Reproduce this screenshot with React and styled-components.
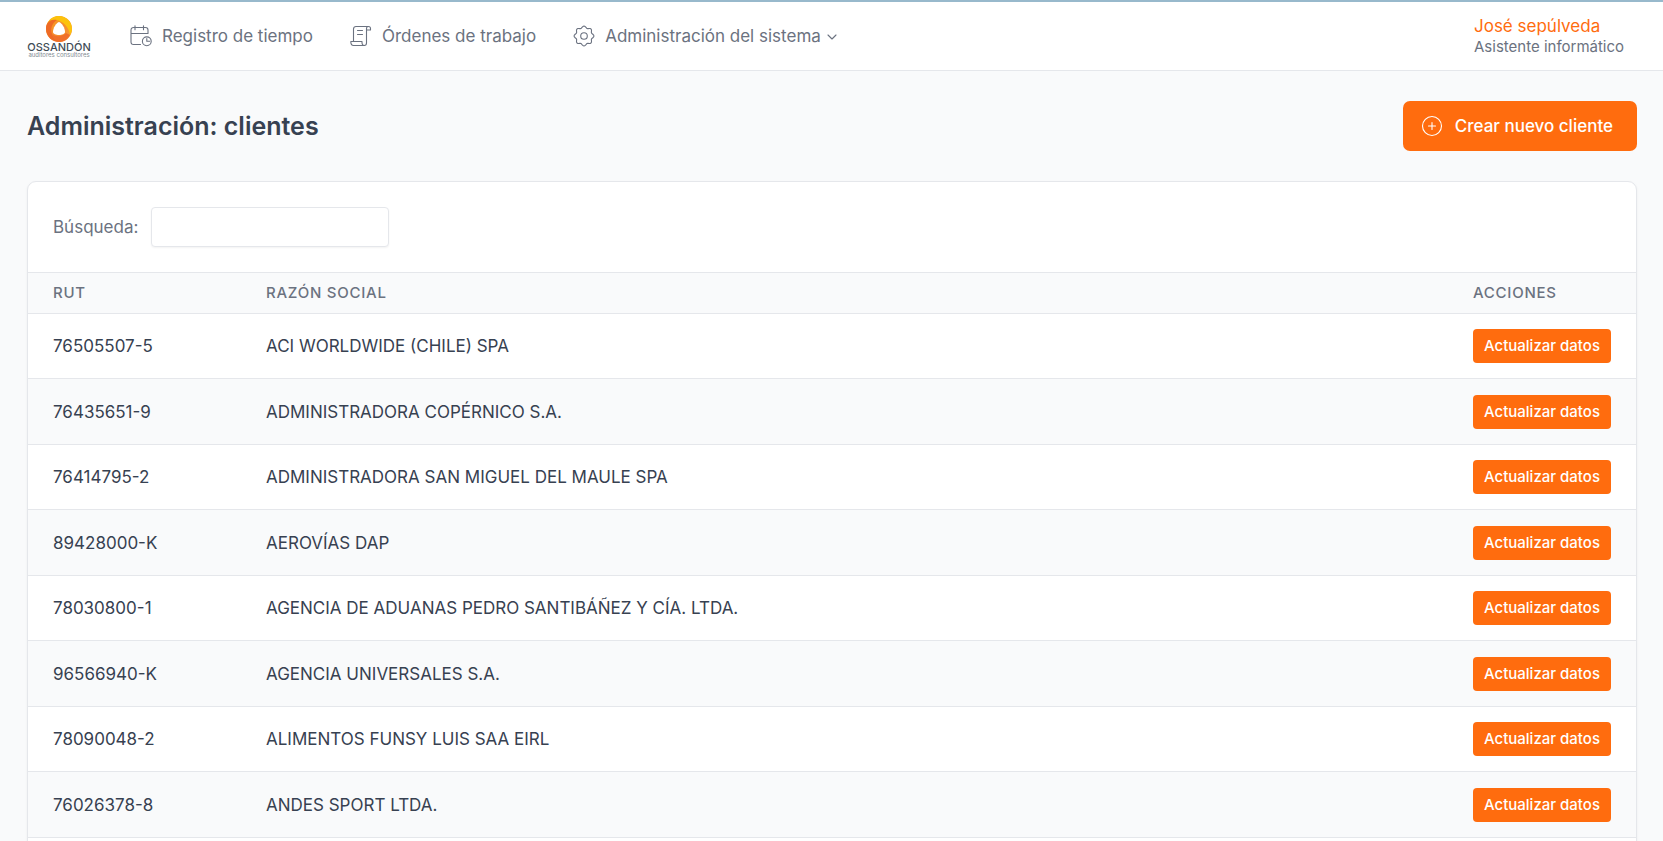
import React, { useState } from "react";
import styled, { createGlobalStyle, css } from "styled-components";

const GlobalStyle = createGlobalStyle`
	*,
	*::before,
	*::after {
		box-sizing: border-box;
	}

	body {
		margin: 0;
		background-color: #f9fafb;
		color: #374151;
		font-family: Inter, "Liberation Sans", sans-serif;
		font-size: 17px;
		line-height: 26px;
	}

	button,
	input {
		font: inherit;
	}
`;

const Header = styled.header`
	display: flex;
	align-items: center;
	justify-content: space-between;
	height: 71px;
	padding: 0 36px 0 26px;
	background-color: #fff;
	border-top: 2px solid #98b9cc;
	border-bottom: 1px solid #e5e7eb;
`;

const Menu = styled.nav`
	display: flex;
	align-items: center;
	gap: 37px;
`;

const LogoLink = styled.a`
	display: flex;
`;

const menuItem = css`
	display: flex;
	align-items: center;
	gap: 10px;
	padding: 0;
	border: 0;
	background: none;
	color: #6b7280;
	text-decoration: none;
	cursor: pointer;
`;

const MenuLink = styled.a`
	${menuItem}
`;

const MenuButton = styled.button`
	${menuItem}
`;

const MenuLabel = styled.span`
	display: flex;
	align-items: center;
	gap: 6px;
`;

const Icon = styled.svg`
	flex: none;
	fill: none;
	stroke: currentColor;
	stroke-width: 1.1;
	stroke-linecap: round;
	stroke-linejoin: round;
`;

const User = styled.div`
	display: flex;
	flex-direction: column;
	min-width: 153px;
`;

const UserName = styled.span`
	color: #ff6c0e;
	line-height: 22px;
`;

const UserRole = styled.span`
	color: #6b7280;
	font-size: 15px;
	line-height: 20px;
`;

const Main = styled.main`
	padding: 30px 26px 30px 27px;
`;

const TitleBar = styled.div`
	display: flex;
	align-items: center;
	justify-content: space-between;
	margin-bottom: 30px;
`;

const Title = styled.h1`
	margin: 0;
	font-size: 25px;
	font-weight: 600;
	line-height: 34px;
`;

const Button = styled.button`
	display: inline-flex;
	align-items: center;
	justify-content: center;
	gap: ${(props) => (props.$small ? "0" : "12px")};
	height: ${(props) => (props.$small ? "34px" : "50px")};
	padding: ${(props) => (props.$small ? "0 11px" : "0 24px 0 18px")};
	border: 0;
	border-radius: ${(props) => (props.$small ? "4px" : "7px")};
	background-color: #ff6c0e;
	color: #fff;
	font-size: ${(props) => (props.$small ? "15px" : "17px")};
	font-weight: 500;
	white-space: nowrap;
	cursor: pointer;

	&:hover {
		background-color: #f06000;
	}
`;

const Card = styled.section`
	overflow: hidden;
	padding-bottom: 26px;
	background-color: #fff;
	border: 1px solid #e5e7eb;
	border-radius: 9px;
	box-shadow: 0 1px 3px rgba(0, 0, 0, 0.05);
`;

const Search = styled.form`
	display: flex;
	align-items: center;
	gap: 13px;
	padding: 25px;
	color: #6b7280;
`;

const SearchInput = styled.input`
	width: 238px;
	height: 40px;
	padding: 0 12px;
	border: 1px solid #e5e7eb;
	border-radius: 4px;
	background-color: #fff;
	color: #374151;
	box-shadow: 0 1px 2px rgba(0, 0, 0, 0.05);
`;

const Table = styled.table`
	width: 100%;
	border-collapse: separate;
	border-spacing: 0;
	text-align: left;
`;

const HeadCell = styled.th`
	width: ${(props) => props.$width || "auto"};
	height: 42px;
	padding: 0 25px;
	border-top: 1px solid #e5e7eb;
	border-bottom: 1px solid #e5e7eb;
	background-color: #f9fafb;
	color: #6b7280;
	font-size: 15px;
	font-weight: 500;
	letter-spacing: 0.05em;
	line-height: 20px;
	text-transform: uppercase;
`;

const Cell = styled.td`
	height: 65px;
	padding: 0 25px;
	border-bottom: 1px solid #e5e7eb;
`;

const Row = styled.tr`
	&:nth-child(even) ${Cell} {
		height: 66px;
		background-color: #f9fafb;
	}
`;

const clients = [
	{ rut: "76505507-5", name: "ACI WORLDWIDE (CHILE) SPA" },
	{ rut: "76435651-9", name: "ADMINISTRADORA COPÉRNICO S.A." },
	{ rut: "76414795-2", name: "ADMINISTRADORA SAN MIGUEL DEL MAULE SPA" },
	{ rut: "89428000-K", name: "AEROVÍAS DAP" },
	{ rut: "78030800-1", name: "AGENCIA DE ADUANAS PEDRO SANTIBÁÑEZ Y CÍA. LTDA." },
	{ rut: "96566940-K", name: "AGENCIA UNIVERSALES S.A." },
	{ rut: "78090048-2", name: "ALIMENTOS FUNSY LUIS SAA EIRL" },
	{ rut: "76026378-8", name: "ANDES SPORT LTDA." },
];

const Logo = () => (
	<svg width="67" height="46" viewBox="0 0 67 46" role="img" aria-label="Ossandón">
		<defs>
			<linearGradient id="ring" x1="0" y1="0" x2="1" y2="1">
				<stop offset="0" stopColor="#f9a51a" />
				<stop offset="0.5" stopColor="#f58a2c" />
				<stop offset="1" stopColor="#f6a03c" />
			</linearGradient>
		</defs>
		<circle cx="33" cy="16" r="13" fill="url(#ring)" />
		<path d="M21 11C24 5 28 3 33 3c7 0 13 5.500 13 13 0 2-1 4-2 6C43 14 37 8 30 7c-4-.5-7 1-9 4Z" fill="#fcc20c" />
		<path d="M21 11c2-4 6-5 10-4-5 3-7 9-5 14 1 4 4 6 8 8-8 0-14-6-14-13 0-2 0-3 1-5Z" fill="#ee6a25" />
		<path d="M26 21c3 3 10 3 14-1l4 2c-2 4-6 7-10 7-4-1-7-4-8-8Z" fill="#f0702a" />
		<path d="M33 9c3 1 6 6 6 10 0 2-3 3-6 3s-6-1-6-3c0-4 3-9 6-10Z" fill="#fff" />
		<text x="33" y="38" textAnchor="middle" fontFamily="Inter, sans-serif" fontSize="11" fontWeight="500" fill="#3f4d57">
			OSSANDÓN
		</text>
		<text x="33" y="44" textAnchor="middle" fontFamily="Inter, sans-serif" fontSize="6" fill="#7f8a91">
			auditores consultores
		</text>
	</svg>
);

const CalendarIcon = () => (
	<Icon width="22" height="22" viewBox="0 0 22 22" aria-hidden="true">
		<path d="M10.500 19.500h-7a2.500 2.500 0 0 1-2.500-2.500V5a2.500 2.500 0 0 1 2.500-2.500h12A2.500 2.500 0 0 1 18 5v3.500H1M5 .8v4M13.500 .8v4" />
		<circle cx="16.800" cy="16.300" r="4.400" />
		<path d="M16.800 13.500v2.800h2.800" />
	</Icon>
);

const ScrollIcon = () => (
	<Icon width="22" height="22" viewBox="0 0 22 22" aria-hidden="true">
		<path d="M18 1.500H6A2.500 2.500 0 0 0 3.500 4v12.500H.8c0 2.500.8 4 2.700 4h11" />
		<path d="M3.500 16.500h8.500c-.2 2.500.6 4 2.300 4s2.200-1 2.200-2.500V3.500a2 2 0 0 1 4 0v1.500h-4M7.500 5.500h5M7.500 9.500h5" />
	</Icon>
);

// eight-lobed outline, one point every 3.75 degrees
const gearPoints = Array.from({ length: 96 }, (_, i) => {
	const angle = (i / 96) * Math.PI * 2;
	const radius = 9 + 0.9 * Math.cos(angle * 8);
	const x = 11 + radius * Math.cos(angle);
	const y = 11 + radius * Math.sin(angle);
	return `${x.toFixed(2)},${y.toFixed(2)}`;
}).join(" ");

const GearIcon = () => (
	<Icon width="22" height="22" viewBox="0 0 22 22" aria-hidden="true">
		<polygon points={gearPoints} />
		<circle cx="11" cy="11" r="3.300" />
	</Icon>
);

const ChevronIcon = () => (
	<Icon width="10" height="10" viewBox="0 0 10 10" aria-hidden="true">
		<path d="m1 4 4 4 4-4" />
	</Icon>
);

const PlusIcon = () => (
	<Icon width="22" height="22" viewBox="0 0 22 22" aria-hidden="true">
		<circle cx="11" cy="11" r="9.500" />
		<path d="M11 7.500v7M7.500 11h7" />
	</Icon>
);

const App = () => {
	const [search, setSearch] = useState("");
	const term = search.trim().toLowerCase();
	const rows = clients.filter(
		({ rut, name }) =>
			rut.toLowerCase().includes(term) || name.toLowerCase().includes(term)
	);

	return (
		<>
			<GlobalStyle />
			<Header>
				<Menu>
					<LogoLink href="#inicio">
						<Logo />
					</LogoLink>
					<MenuLink href="#registro">
						<CalendarIcon />
						Registro de tiempo
					</MenuLink>
					<MenuLink href="#ordenes">
						<ScrollIcon />
						Órdenes de trabajo
					</MenuLink>
					<MenuButton type="button" aria-haspopup="true">
						<GearIcon />
						<MenuLabel>
							Administración del sistema
							<ChevronIcon />
						</MenuLabel>
					</MenuButton>
				</Menu>
				<User>
					<UserName>José sepúlveda</UserName>
					<UserRole>Asistente informático</UserRole>
				</User>
			</Header>
			<Main>
				<TitleBar>
					<Title>Administración: clientes</Title>
					<Button type="button">
						<PlusIcon />
						Crear nuevo cliente
					</Button>
				</TitleBar>
				<Card>
					<Search onSubmit={(e) => e.preventDefault()}>
						<label htmlFor="busqueda">Búsqueda:</label>
						<SearchInput
							id="busqueda"
							type="text"
							value={search}
							onChange={(e) => setSearch(e.target.value)}
						/>
					</Search>
					<Table>
						<thead>
							<tr>
								<HeadCell $width="213px">Rut</HeadCell>
								<HeadCell>Razón social</HeadCell>
								<HeadCell $width="188px">Acciones</HeadCell>
							</tr>
						</thead>
						<tbody>
							{rows.map(({ rut, name }) => (
								<Row key={rut}>
									<Cell>{rut}</Cell>
									<Cell>{name}</Cell>
									<Cell>
										<Button type="button" $small>
											Actualizar datos
										</Button>
									</Cell>
								</Row>
							))}
						</tbody>
					</Table>
				</Card>
			</Main>
		</>
	);
};

export default App;
